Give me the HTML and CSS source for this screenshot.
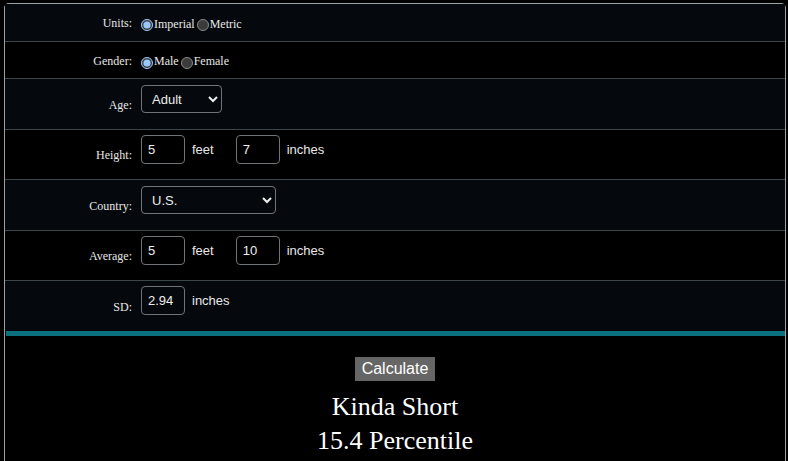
FILE: index.html
```html
<!DOCTYPE html>
<html lang="en">
<head>
  <meta charset="UTF-8">
  <title>Height Percentile Calculator</title>
  <link rel="stylesheet" href="styles.css">
</head>
<body>
  <div class="calc">
    <div class="rows">
      <div class="row short">
        <span class="label">Units:</span>
        <div class="field radios">
          <input type="radio" name="units" checked><span>Imperial</span>
          <input type="radio" name="units"><span>Metric</span>
        </div>
      </div>
      <div class="row short">
        <span class="label">Gender:</span>
        <div class="field radios">
          <input type="radio" name="gender" checked><span>Male</span>
          <input type="radio" name="gender"><span>Female</span>
        </div>
      </div>
      <div class="row">
        <span class="label">Age:</span>
        <div class="field">
          <select class="age"><option>Adult</option></select>
        </div>
      </div>
      <div class="row">
        <span class="label">Height:</span>
        <div class="field">
          <input type="text" class="num" value="5"><span class="unit">feet</span>
          <input type="text" class="num" value="7"><span class="unit">inches</span>
        </div>
      </div>
      <div class="row">
        <span class="label">Country:</span>
        <div class="field">
          <select class="country"><option>U.S.</option></select>
        </div>
      </div>
      <div class="row">
        <span class="label">Average:</span>
        <div class="field">
          <input type="text" class="num" value="5"><span class="unit">feet</span>
          <input type="text" class="num" value="10"><span class="unit">inches</span>
        </div>
      </div>
      <div class="row">
        <span class="label">SD:</span>
        <div class="field">
          <input type="text" class="num" value="2.94"><span class="unit">inches</span>
        </div>
      </div>
    </div>

    <div class="result">
      <button>Calculate</button>
      <div class="verdict">Kinda Short</div>
      <div class="verdict">15.4 Percentile</div>
    </div>
  </div>
</body>
</html>
```

FILE: styles.css
```css
html {
  color-scheme: dark;
}
body {
  margin: 0;
  background: #000;
  color: #e6e6e6;
  font-family: "Liberation Serif", "Times New Roman", serif;
  overflow: hidden;
}
.calc {
  margin: 3px 2px 0 4px;
  border: 1px solid #9aa2a6;
  border-bottom: none;
  border-radius: 5px 5px 0 0;
  height: 460px;
}
.rows {
  border-bottom: 5px solid #0b717e;
  margin: 0 0 0 1px;
}
.row {
  display: grid;
  grid-template-columns: 127px 1fr;
  column-gap: 9px;
  align-items: center;
  background: #05090d;
  border-top: 1px solid #3d474b;
  height: 49.6px;
  margin-left: -1px;
}
.row:first-child {
  border-top: none;
}
.row:nth-child(even) {
  background: #000;
}
.row.short {
  height: 36px;
}
.row.short:first-child {
  height: 37px;
}
.label {
  text-align: right;
  font-size: 12px;
  padding-top: 2px;
}
.field {
  display: flex;
  align-items: center;
  padding: 5px 0 16px;
  font-family: "Liberation Sans", Arial, sans-serif;
  font-size: 13px;
  color: #e8e8e8;
}
.radios {
  padding: 3px 0 0;
  font-family: "Liberation Serif", "Times New Roman", serif;
  font-size: 12px;
}
.radios input {
  width: 12px;
  height: 12px;
  margin: 2px 1px 0 0;
}
.radios span {
  margin-right: 2px;
}
.num {
  box-sizing: border-box;
  width: 44px;
  height: 29px;
  margin: 0;
  padding: 0 6px;
  background: transparent;
  color: #eee;
  border: 1px solid #6f7478;
  border-radius: 4px;
  font-family: "Liberation Sans", Arial, sans-serif;
  font-size: 13px;
}
.unit {
  margin: 0 22px 0 7px;
}
select {
  box-sizing: border-box;
  height: 28px;
  margin: 1px 0 0;
  padding: 0 4px 0 6px;
  background-color: transparent;
  color: #eee;
  border: 1px solid #6f7478;
  border-radius: 4px;
  font-family: "Liberation Sans", Arial, sans-serif;
  font-size: 13px;
}
.age {
  width: 81px;
}
.country {
  width: 135px;
}
.result {
  text-align: center;
  padding-top: 21px;
}
button {
  background: #666;
  color: #fff;
  border: none;
  border-radius: 0;
  padding: 0 7px;
  height: 24px;
  font-family: "Liberation Sans", Arial, sans-serif;
  font-size: 16px;
  margin: 0 0 9px 0;
}
.verdict {
  font-size: 26px;
  line-height: 34px;
  color: #fff;
}
```
